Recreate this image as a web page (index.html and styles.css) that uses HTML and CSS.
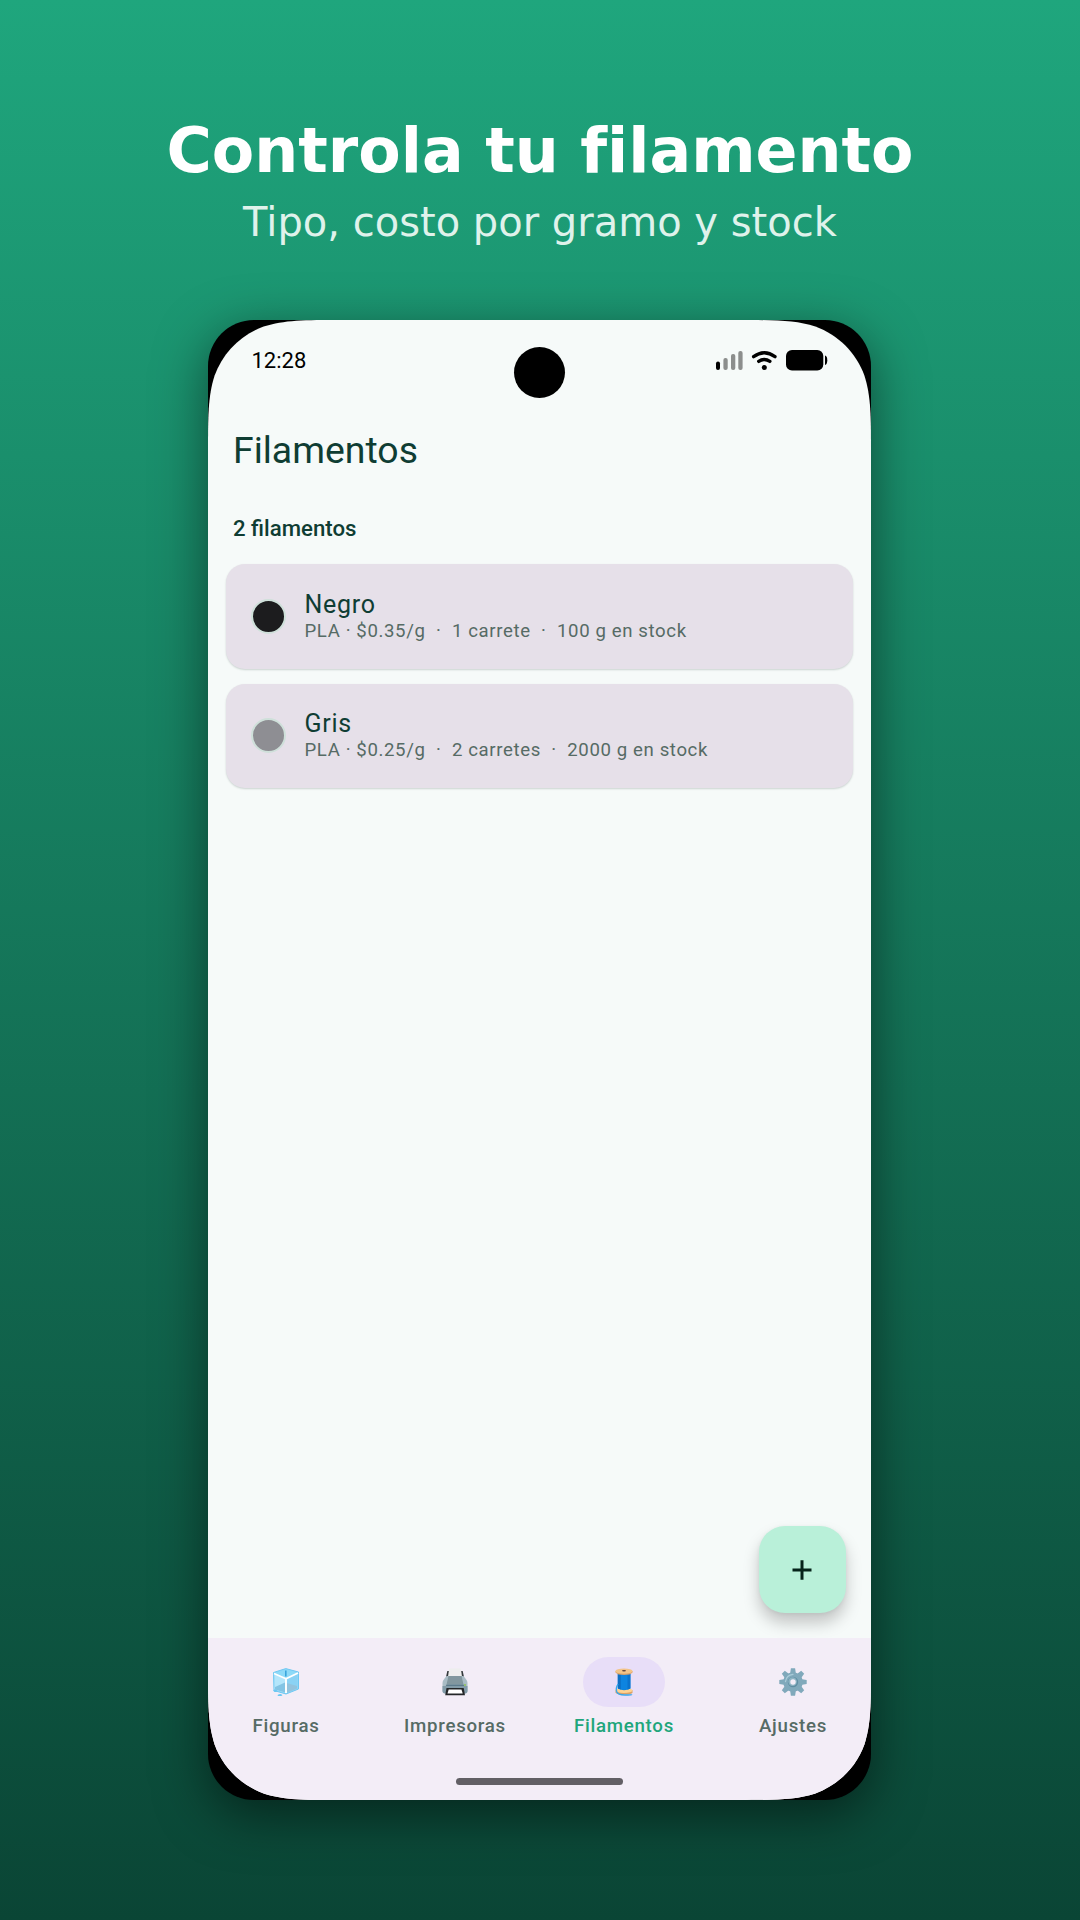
FILE: index.html
```html
<!DOCTYPE html>
<html lang="es">
<head>
  <meta charset="UTF-8" />
  <meta name="viewport" content="width=device-width, initial-scale=1.0"/>
  <title>Filamentos</title>
  <link rel="stylesheet" href="styles.css">
</head>
<body>
  <!-- Headline -->
  <header class="promo">
    <h1>Controla tu filamento</h1>
    <p>Tipo, costo por gramo y stock</p>
  </header>

  <!-- Phone -->
  <div class="phone">
    <div class="screen">
      <div class="camera"></div>

      <div class="status-bar">
        <span class="clock">12:28</span>
        <svg class="status-icons" width="114" height="24" viewBox="0 0 114 24">
          <rect x="1" y="13.5" width="4" height="8.5" rx="2"/>
          <g fill="#8c8e8d">
            <rect x="8.4" y="10" width="4.3" height="12" rx="2"/>
            <rect x="16" y="6" width="4.3" height="16" rx="2"/>
            <rect x="23.3" y="3" width="4.3" height="19" rx="2"/>
          </g>
          <g fill="none" stroke="#000" stroke-width="3.3" stroke-linecap="round">
            <path d="M38.6 8.7Q49.3 0.8 60 8.7"/>
            <path d="M43.7 13.4Q49.3 9.6 54.9 13.4"/>
          </g>
          <circle cx="49.3" cy="19.6" r="2.5"/>
          <rect x="71" y="2" width="37.3" height="20.5" rx="6"/>
          <path d="M110 7.5q2.3 0.6 2.3 4.7t-2.3 4.8z"/>
        </svg>
      </div>

      <main class="content">
        <h2>Filamentos</h2>
        <p class="count">2 filamentos</p>

        <div class="card">
          <span class="dot black"></span>
          <div class="card-text">
            <h3>Negro</h3>
            <p>PLA · $0.35/g &nbsp;·&nbsp; 1 carrete &nbsp;·&nbsp; 100 g en stock</p>
          </div>
        </div>
        <div class="card">
          <span class="dot gray"></span>
          <div class="card-text">
            <h3>Gris</h3>
            <p>PLA · $0.25/g &nbsp;·&nbsp; 2 carretes &nbsp;·&nbsp; 2000 g en stock</p>
          </div>
        </div>

        <button class="fab" aria-label="Agregar">
          <svg width="20" height="20" viewBox="0 0 20 20"><path d="M10 0.3v19.4M0.5 10h19" stroke="#06231a" stroke-width="3"/></svg>
        </button>
      </main>

      <!-- Bottom Navigation -->
      <nav>
        <a class="tab">
          <span class="pill">
            <svg width="28" height="28" viewBox="0 0 28 28">
              <path d="M1.5 4.5 13.8 0.6 26.5 4v17L14 26 2 22.5z" fill="#8fd8f8" stroke="#6fc8f2" stroke-width="1" stroke-linejoin="round"/>
              <path d="M3.5 5 13.8 1.7 24.5 4.6 14 9.8z" fill="#8ddaf8"/>
              <path d="M13 2.5h1.6v6h-1.6z" fill="#3aa5dc"/>
              <path d="M2.5 6.5 13.5 11v13.8L2.5 21.5z" fill="#b4e6fb"/>
              <path d="M3 19l10-4.5v10L3 21.5z" fill="#83c4e4"/>
              <path d="M14.5 11 25.5 6v14.3l-11 4.7z" fill="#8ad2f4"/>
              <path d="M14.5 15l10.5 3v2.500L14.5 25z" fill="#93c3dd"/>
              <path d="M2 5.5 14 10.8 26 5M14 10.8V25" fill="none" stroke="#fff" stroke-width="1.9"/>
              <path d="M1 22.5q2.500-1.800 4 0t-2.500 1.500zM5.500 27q3-2 4.500-.3t-4 1.200z" fill="#6bc7f2"/>
            </svg>
          </span>
          Figuras
        </a>
        <a class="tab">
          <span class="pill">
            <svg width="28" height="28" viewBox="0 0 28 28">
              <path d="M6.3 3h15.4l1.3 6H5z" fill="#33383b"/>
              <path d="M8.2 0.5h11.6L21 8.5H7z" fill="#eee"/>
              <path d="M5.5 8 3 11.2Q1.5 13 1.5 15v8q0 2.5 2.5 2.5h20q2.5 0 2.5-2.500v-8q0-2-1.500-3.800L22.500 8z" fill="#a9bcc5"/>
              <path d="M7.5 8h13l2 8.5h-17z" fill="#82979f"/>
              <path d="M5.5 16.5h17l1 2h-19z" fill="#5c7b8b"/>
              <path d="M1.500 18h25v4.500q0 3-3 3h-19q-3 0-3-3z" fill="#829ba8"/>
              <path d="M5.5 20h17.2l1.3 7.300H4.200z" fill="#242628"/>
              <path d="M7.7 21.5h12.8l1.2 4H6.500z" fill="#fff"/>
              <circle cx="24" cy="17" r="0.9" fill="#8bc34a"/>
            </svg>
          </span>
          Impresoras
        </a>
        <a class="tab active">
          <span class="pill">
            <svg width="28" height="28" viewBox="0 0 28 28">
              <path d="M5.5 22v2.2q0 2.3 8.5 2.3t8.5-2.300V22z" fill="#dca267"/>
              <ellipse cx="14" cy="22.6" rx="8.5" ry="2.5" fill="#ffd391"/>
              <path d="M7.8 6h12.6v14.500q-6.300 3.500-12.600 0z" fill="#0d84e0"/>
              <path d="M7.8 6h3v15.5l-3-1z" fill="#0c6fc4"/>
              <path d="M17.5 6h2.900v14.500l-2.900 1.200z" fill="#0a73cd"/>
              <path d="M5.5 3v1.5Q7.5 7 14 7t8.500-2.500V3z" fill="#d9a067"/>
              <ellipse cx="14" cy="3.2" rx="8.6" ry="2.6" fill="#f3c489"/>
              <ellipse cx="14" cy="2.8" rx="2" ry="0.8" fill="#5d4037"/>
              <path d="M8 16Q5.500 20 6.600 23.500T15 27t6.500-.7" fill="none" stroke="#39a7ea" stroke-width="1.3"/>
            </svg>
          </span>
          Filamentos
        </a>
        <a class="tab">
          <span class="pill">
            <svg width="28" height="28" viewBox="0 0 28 28">
              <g fill="#80a9bb">
                <path id="tooth" d="M11.9 0.3h4.200l0.900 6h-6z"/>
                <use href="#tooth" transform="rotate(45 14 14)"/>
                <use href="#tooth" transform="rotate(90 14 14)"/>
                <use href="#tooth" transform="rotate(135 14 14)"/>
                <use href="#tooth" transform="rotate(180 14 14)"/>
                <use href="#tooth" transform="rotate(225 14 14)"/>
                <use href="#tooth" transform="rotate(270 14 14)"/>
                <use href="#tooth" transform="rotate(315 14 14)"/>
                <circle cx="14" cy="14" r="9.8"/>
              </g>
              <path d="M6.5 13.5Q7.500 7 14 6.300" fill="none" stroke="#a9cbd8" stroke-width="1.3" stroke-linecap="round"/>
              <circle cx="14" cy="14" r="5.2" fill="#5f8ea3"/>
              <circle cx="13.6" cy="13.6" r="4.3" fill="#8db4c3"/>
              <circle cx="14" cy="14" r="2.7" fill="#f3edf7"/>
            </svg>
          </span>
          Ajustes
        </a>
        <div class="home-indicator"></div>
      </nav>
    </div>
  </div>
</body>
</html>
```
FILE: styles.css
```css
/* Reset and Base Styles */
* {
  margin: 0;
  padding: 0;
  box-sizing: border-box;
}
body {
  width: 1080px;
  height: 1920px;
  overflow: hidden;
  font-family: Roboto, sans-serif;
  background: linear-gradient(#1fa67d, #0a4535);
}

/* Headline */
.promo {
  height: 320px;
  padding-top: 115px;
  text-align: center;
  font-family: "DejaVu Sans", sans-serif;
}
.promo h1 {
  font-size: 61.8px;
  line-height: 72px;
  color: #fff;
}
.promo p {
  margin-top: 11px;
  font-size: 40px;
  line-height: 48px;
  color: #dff2eb;
}

/* Phone */
.phone {
  width: 663px;
  height: 1480px;
  margin-left: 208px;
  border-radius: 46px;
  background-color: #000;
  box-shadow: 0 14px 52px rgba(0, 0, 0, 0.5);
}
.screen {
  position: relative;
  height: 100%;
  display: flex;
  flex-direction: column;
  background-color: #f6faf9;
  clip-path: path("M134 0H529C567 0 586.600 0 607.400 6.600C630.200 14.900 648.100 32.800 656.400 55.600C663 76.400 663 96 663 134V1346C663 1384 663 1403.600 656.400 1424.400C648.100 1447.200 630.200 1465.100 607.400 1473.400C586.600 1480 567 1480 529 1480H134C96 1480 76.400 1480 55.600 1473.400C32.800 1465.100 14.900 1447.200 6.600 1424.400C0 1403.600 0 1384 0 1346V134C0 96 0 76.400 6.600 55.600C14.900 32.800 32.800 14.900 55.600 6.600C76.400 0 96 0 134 0Z");
}
.camera {
  position: absolute;
  top: 27.3px;
  left: 306px;
  width: 51px;
  height: 51px;
  border-radius: 50%;
  background-color: #000;
}

/* Status Bar */
.status-bar {
  display: flex;
  justify-content: space-between;
  align-items: center;
  height: 80px;
  padding: 0 42px 0 43.5px;
}
.clock {
  font-size: 22px;
  color: #000;
}

/* Content */
.content {
  position: relative;
  flex: 1;
  padding: 0 18px;
}
.content h2 {
  padding: 27px 0 0 7px;
  font-size: 37.4px;
  font-weight: 400;
  line-height: 46px;
  color: #0f3d33;
}
.count {
  margin: 40px 0 21px 7px;
  font-size: 22.2px;
  font-weight: 500;
  line-height: 30px;
  color: #0f3d33;
}
.card {
  display: flex;
  align-items: center;
  height: 104.5px;
  margin-bottom: 15px;
  padding: 0 25px;
  border-radius: 19px;
  background-color: #e6e0e9;
  box-shadow: 0 1px 2px rgba(0, 40, 30, 0.18);
}
.card-text {
  padding-top: 1.5px;
}
.dot {
  width: 35px;
  height: 35px;
  margin-right: 18.5px;
  border: 2px solid #cfe0da;
  border-radius: 50%;
}
.black {
  background-color: #1c1c1e;
}
.gray {
  background-color: #8e8e93;
}
.card h3 {
  font-size: 25px;
  font-weight: 400;
  line-height: 28px;
  letter-spacing: 0.7px;
  color: #0f3d33;
}
.card p {
  font-size: 18.6px;
  line-height: 25px;
  letter-spacing: 0.62px;
  color: #566b65;
}

/* Floating Button */
.fab {
  position: absolute;
  right: 25px;
  bottom: 25px;
  display: flex;
  align-items: center;
  justify-content: center;
  width: 87px;
  height: 87px;
  padding-right: 1px;
  border: none;
  border-radius: 26px;
  background-color: #b9f0d9;
  box-shadow: 0 10px 16px rgba(0, 0, 0, 0.21), 0 1px 4px rgba(0, 0, 0, 0.06);
}

/* Bottom Navigation */
nav {
  position: relative;
  display: flex;
  gap: 13px;
  height: 162px;
  background-color: #f3edf7;
}
.tab {
  flex: 1;
  display: flex;
  flex-direction: column;
  align-items: center;
  gap: 6px;
  padding-top: 19px;
  font-size: 18.7px;
  font-weight: 500;
  line-height: 26px;
  letter-spacing: 0.72px;
  color: #566b65;
}
.pill {
  display: flex;
  align-items: center;
  justify-content: center;
  width: 82px;
  height: 50px;
  padding: 0 1px 1px 0;
  border-radius: 25px;
}
.active {
  color: #1fa67c;
}
.active .pill {
  background-color: #e8def8;
}
.home-indicator {
  position: absolute;
  bottom: 15px;
  left: 248px;
  width: 167px;
  height: 7px;
  border-radius: 4px;
  background-color: #625f65;
}
```
